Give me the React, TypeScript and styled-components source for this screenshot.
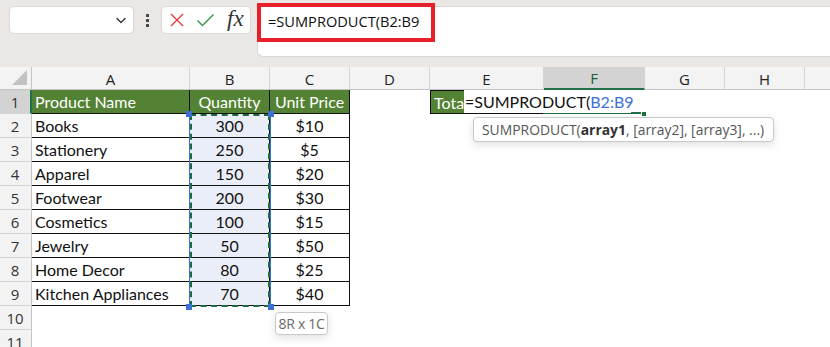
import React from "react";
import styled, { createGlobalStyle, css } from "styled-components";

const Global = createGlobalStyle`
  html, body { margin: 0; padding: 0; background: #fff; overflow: hidden; }
  body { font-family: "Open Sans", "Noto Sans", sans-serif; }
  * { box-sizing: border-box; }
`;

const Page = styled.div`
  width: 830px;
  height: 347px;
  overflow: hidden;
  position: relative;
  background: #fff;
`;

/* ---------- Top bar ---------- */
const TopBar = styled.div`
  height: 67px;
  background: #ebe7e5;
  display: flex;
  align-items: flex-start;
  padding: 6px 0 0 9px;
`;

const NameBox = styled.div`
  width: 125px;
  height: 28px;
  background: #fff;
  border-radius: 5px;
  border: 1px solid #dcd8d6;
  display: flex;
  align-items: center;
  justify-content: flex-end;
  padding-right: 5px;
`;

const Dots = styled.div`
  width: 27px;
  height: 28px;
  display: flex;
  flex-direction: column;
  align-items: center;
  justify-content: center;
  gap: 2px;
  & > span {
    width: 3px;
    height: 3px;
    background: #444;
    border-radius: 0.5px;
  }
`;

const FxGroup = styled.div`
  width: 90px;
  height: 28px;
  background: #fff;
  border-radius: 5px;
  border: 1px solid #dcd8d6;
  display: flex;
  align-items: center;
  padding-left: 7px;
  gap: 11px;
`;

const FxText = styled.span`
  font-family: "Liberation Serif", "DejaVu Serif", serif;
  font-style: italic;
  font-size: 23px;
  color: #333;
  line-height: 1;
  margin-top: -4px;
  margin-left: 1px;
`;

const FormulaBar = styled.div`
  flex: 1;
  height: 51px;
  margin-left: 6px;
  background: #fff;
  border: 1px solid #dcd8d6;
  border-right: none;
  border-radius: 6px 0 0 6px;
  position: relative;
  padding: 4px 0 0 10px;
`;

const FormulaText = styled.div`
  font-family: "Open Sans", sans-serif;
  font-size: 14.6px;
  color: #111;
  line-height: 21px;
`;

const RedBox = styled.div`
  position: absolute;
  left: -1px;
  top: -4px;
  width: 178px;
  height: 39px;
  border: 4px solid #e8202a;
`;

/* ---------- Sheet ---------- */
const Sheet = styled.div`
  position: relative;
  display: grid;
  grid-template-columns: 32px 158px 80px 80px 80px 114px 101px 80px 80px 80px;
  grid-template-rows: 23px repeat(11, 24px);
  font-family: "Lato", "Open Sans", sans-serif;
`;

const ColHead = styled.div<{ $active?: boolean }>`
  background: ${(p) => (p.$active ? "#d3d3d3" : "#f3f3f3")};
  border-right: 1px solid #d4d4d4;
  border-bottom: ${(p) => (p.$active ? "2px solid #1e7145" : "1px solid #c4c4c4")};
  display: flex;
  align-items: center;
  justify-content: center;
  font-family: "Open Sans", sans-serif;
  font-size: 15px;
  color: ${(p) => (p.$active ? "#1e5e3a" : "#222")};
  padding-top: 1px;
`;

const Corner = styled.div`
  background: #f3f3f3;
  border-right: 1px solid #c4c4c4;
  border-bottom: 1px solid #c4c4c4;
  display: flex;
  align-items: flex-end;
  justify-content: flex-end;
  padding: 0 4px 4px 0;
`;

const Tri = styled.div`
  width: 0;
  height: 0;
  border-left: 15px solid transparent;
  border-bottom: 15px solid #c2c2c2;
`;

const RowHead = styled.div<{ $active?: boolean }>`
  background: ${(p) => (p.$active ? "#d3d3d3" : "#f3f3f3")};
  border-right: ${(p) => (p.$active ? "2px solid #1e7145" : "1px solid #c4c4c4")};
  border-bottom: 1px solid #d4d4d4;
  display: flex;
  align-items: center;
  justify-content: center;
  font-family: "Open Sans", sans-serif;
  font-size: 15px;
  color: #333;
  padding-right: ${(p) => (p.$active ? "0" : "1px")};
`;

type Kind = "head" | "data" | "empty";

const Cell = styled.div<{ $kind: Kind; $align?: "left" | "center"; $sel?: boolean }>`
  display: flex;
  align-items: center;
  font-size: 16px;
  white-space: nowrap;
  overflow: hidden;
  padding: 0 3px;
  justify-content: ${(p) => (p.$align === "center" ? "center" : "flex-start")};
  color: #111;
  background: #fff;
  ${(p) =>
    p.$kind === "head" &&
    css`
      background: #548235;
      color: #fff;
      border-right: 1px solid #111;
      border-bottom: 1px solid #111;
    `}
  ${(p) =>
    p.$kind === "data" &&
    css`
      border-right: 1px solid #111;
      border-bottom: 1px solid #111;
    `}
  ${(p) =>
    p.$sel &&
    css`
      background: #eaeef8;
    `}
`;

const EditCell = styled.div`
  display: flex;
  align-items: stretch;
  border: 1px solid #111;
  border-right: none;
  background: #fff;
`;

const EditLabel = styled.span`
  width: 34px;
  background: #548235;
  color: #fff;
  font-size: 16px;
  display: flex;
  align-items: center;
  padding-left: 3px;
  overflow: hidden;
  white-space: nowrap;
`;

const Selection = styled.div`
  position: absolute;
  left: 189px;
  top: 47px;
  width: 82px;
  height: 193px;
  border-left: 1px solid #3f6fd1;
  border-right: 1px solid #3f6fd1;
  pointer-events: none;
`;

const Ants = styled.div`
  position: absolute;
  inset: 0 0 0 0;
  border: 2px dashed #1d6b3e;
`;

const Handle = styled.div<{ $x: "l" | "r"; $y: "t" | "b" }>`
  position: absolute;
  width: 6px;
  height: 6px;
  background: #3f6fd1;
  ${(p) => (p.$x === "l" ? "left: -4px;" : "right: -4px;")}
  ${(p) => (p.$y === "t" ? "top: -3px;" : "bottom: -3px;")}
`;

const Editor = styled.div`
  position: absolute;
  left: 464px;
  top: 23px;
  width: 167px;
  height: 23px;
  background: #fff;
  display: flex;
  align-items: center;
  font-size: 16px;
  color: #111;
  white-space: nowrap;
  padding-left: 1px;
`;

const Ref = styled.span`
  color: #3c72d6;
`;

const Caret = styled.span`
  display: inline-block;
  width: 1px;
  height: 20px;
  background: #111;
  margin-left: 1px;
`;

const FillLine = styled.div`
  position: absolute;
  left: 543px;
  top: 45px;
  width: 98px;
  height: 2px;
  background: #1e7145;
`;

const FillHandle = styled.div`
  position: absolute;
  left: 641px;
  top: 44px;
  width: 6px;
  height: 6px;
  background: #1e7145;
  border: 1px solid #fff;
`;

const Tip = styled.div`
  position: absolute;
  background: #fff;
  border: 1px solid #c9c9c9;
  border-radius: 4px;
  box-shadow: 0 3px 8px rgba(0, 0, 0, 0.12);
  font-family: "Open Sans", sans-serif;
  color: #555;
  display: flex;
  align-items: center;
  white-space: nowrap;
`;

const ArgTip = styled(Tip)`
  left: 473px;
  top: 50px;
  width: 301px;
  height: 25px;
  padding-left: 8px;
  font-size: 13.9px;
  b { color: #333; font-weight: 700; }
`;

const SizeTip = styled(Tip)`
  left: 275px;
  top: 245px;
  width: 53px;
  height: 23px;
  justify-content: center;
  font-size: 14px;
  color: #6a6a6a;
  letter-spacing: -0.3px;
`;

const cols = ["A", "B", "C", "D", "E", "F", "G", "H", ""];

const data: [string, string, string][] = [
  ["Books", "300", "$10"],
  ["Stationery", "250", "$5"],
  ["Apparel", "150", "$20"],
  ["Footwear", "200", "$30"],
  ["Cosmetics", "100", "$15"],
  ["Jewelry", "50", "$50"],
  ["Home Decor", "80", "$25"],
  ["Kitchen Appliances", "70", "$40"],
];

const Empty = ({ n }: { n: number }) => (
  <>
    {Array.from({ length: n }).map((_, i) => (
      <Cell key={i} $kind="empty" />
    ))}
  </>
);

export default function App() {
  return (
    <Page>
      <Global />
      <TopBar>
        <NameBox>
          <svg width="14" height="14" viewBox="0 0 14 14">
            <path d="M2.5 5 L7 9.5 L11.5 5" fill="none" stroke="#333" strokeWidth="1.3" />
          </svg>
        </NameBox>
        <Dots>
          <span />
          <span />
          <span />
        </Dots>
        <FxGroup>
          <svg width="16" height="16" viewBox="0 0 16 16">
            <path d="M2 2 L14 14 M14 2 L2 14" stroke="#e5393f" strokeWidth="1.4" fill="none" />
          </svg>
          <svg width="19" height="16" viewBox="0 0 19 16">
            <path d="M1.5 8.5 L6.5 13.5 L17.5 2.5" stroke="#3f9b4c" strokeWidth="1.5" fill="none" />
          </svg>
          <FxText>fx</FxText>
        </FxGroup>
        <FormulaBar>
          <FormulaText>=SUMPRODUCT(B2:B9</FormulaText>
          <RedBox />
        </FormulaBar>
      </TopBar>

      <Sheet>
        <Corner>
          <Tri />
        </Corner>
        {cols.map((c, i) => (
          <ColHead key={i} $active={c === "F"}>
            {c}
          </ColHead>
        ))}

        <RowHead $active>1</RowHead>
        <Cell $kind="head">Product Name</Cell>
        <Cell $kind="head" $align="center">Quantity</Cell>
        <Cell $kind="head" $align="center">Unit Price</Cell>
        <Cell $kind="empty" />
        <EditCell>
          <EditLabel>Total</EditLabel>
        </EditCell>
        <Empty n={4} />

        {data.map(([name, qty, price], i) => (
          <React.Fragment key={name}>
            <RowHead>{i + 2}</RowHead>
            <Cell $kind="data">{name}</Cell>
            <Cell $kind="data" $align="center" $sel>
              {qty}
            </Cell>
            <Cell $kind="data" $align="center">
              {price}
            </Cell>
            <Empty n={6} />
          </React.Fragment>
        ))}

        {[10, 11].map((n) => (
          <React.Fragment key={n}>
            <RowHead>{n}</RowHead>
            <Empty n={9} />
          </React.Fragment>
        ))}

        <Selection>
          <Ants />
          <Handle $x="l" $y="t" />
          <Handle $x="r" $y="t" />
          <Handle $x="l" $y="b" />
          <Handle $x="r" $y="b" />
        </Selection>

        <FillLine />
        <FillHandle />
        <Editor>
          =SUMPRODUCT(<Ref>B2:B9</Ref>
          <Caret />
        </Editor>

        <ArgTip>
          SUMPRODUCT(<b>array1</b>, [array2], [array3], ...)
        </ArgTip>
        <SizeTip>8R x 1C</SizeTip>
      </Sheet>
    </Page>
  );
}
